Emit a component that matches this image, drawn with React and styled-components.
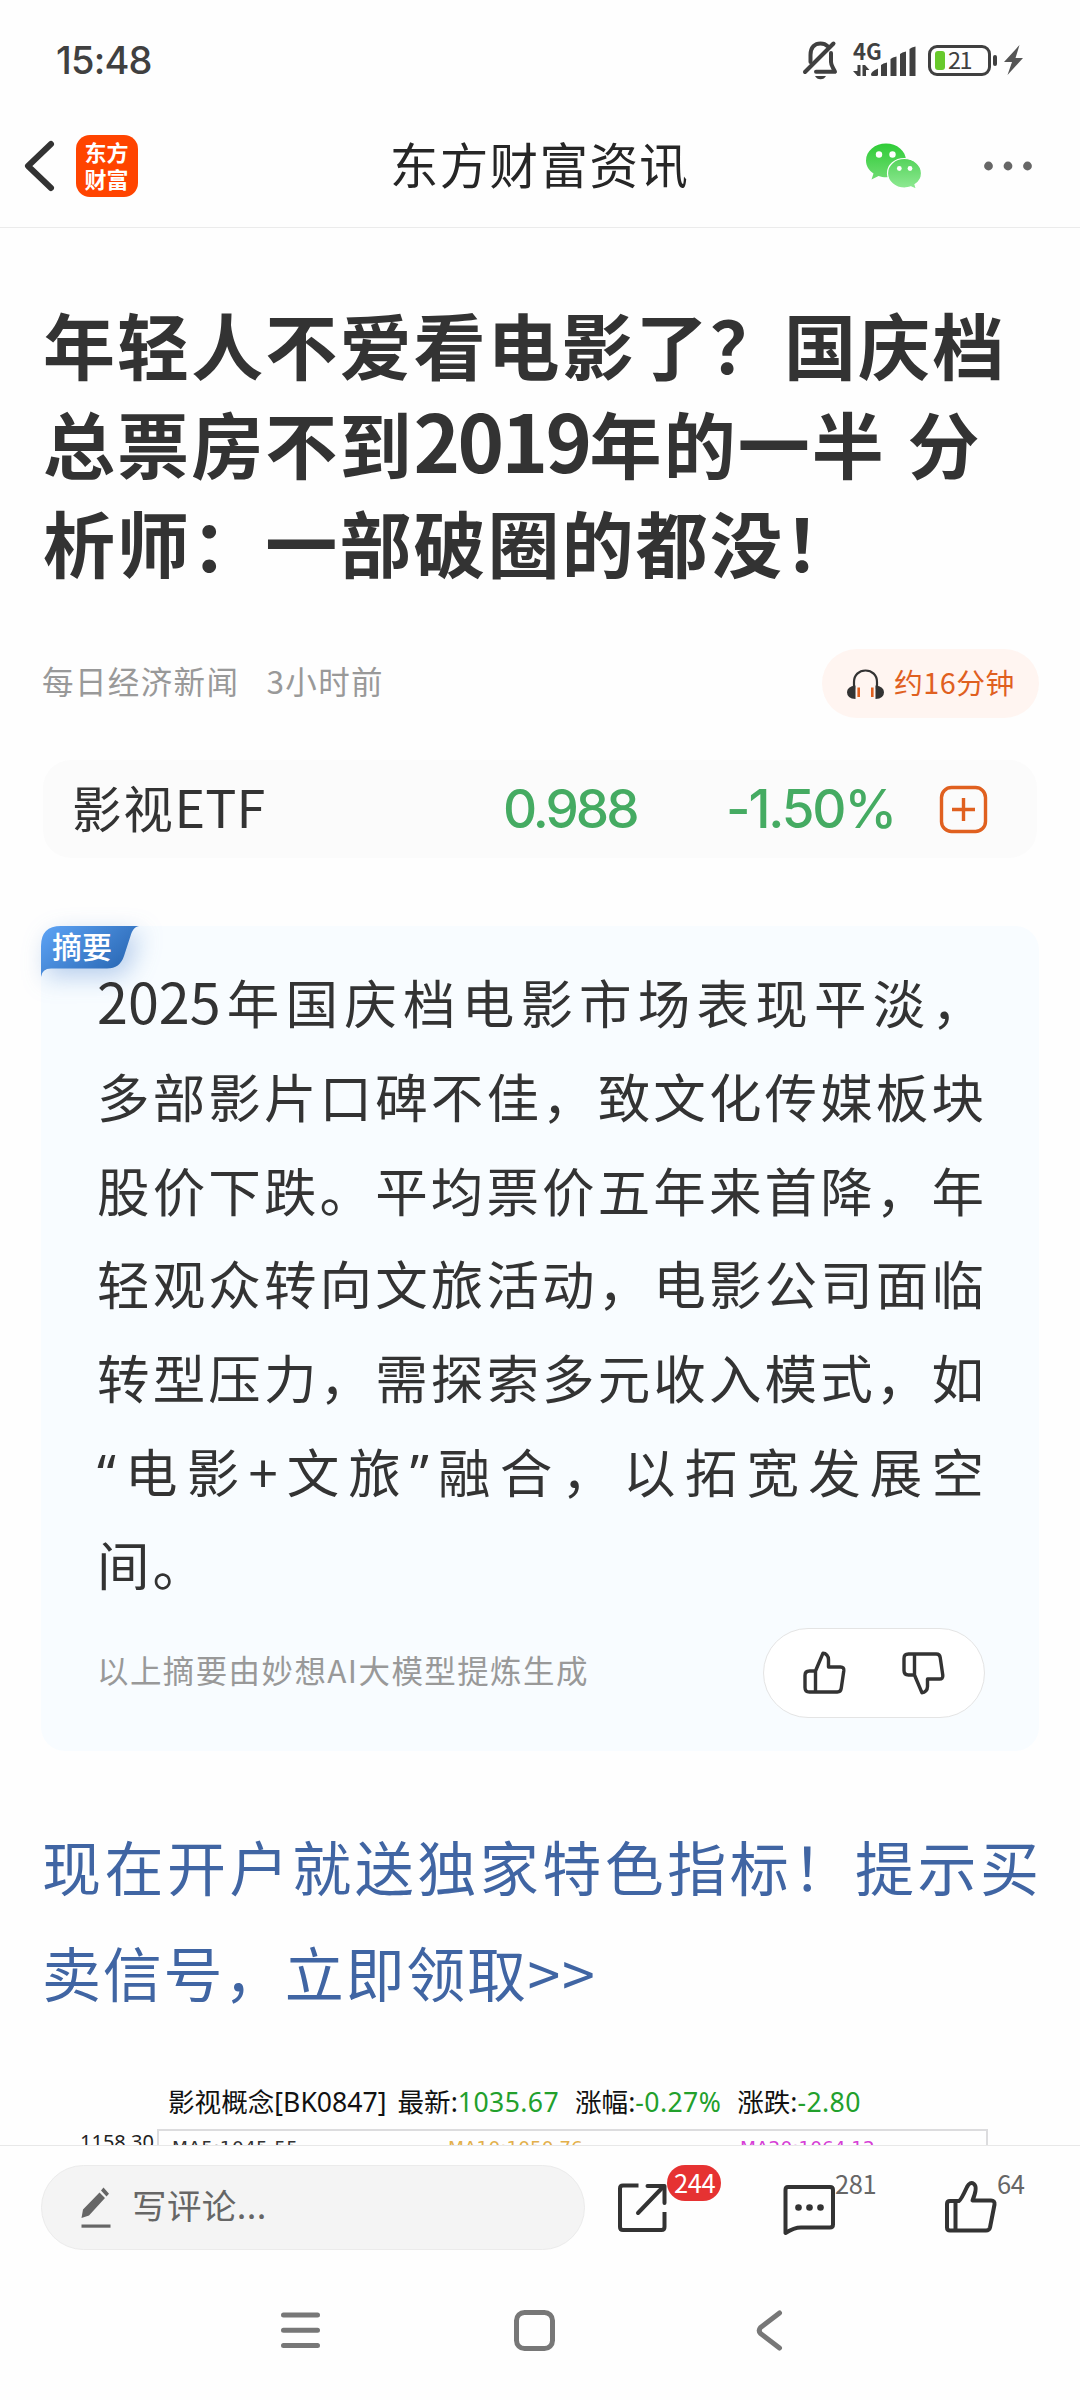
import React from "react";
import styled, { createGlobalStyle } from "styled-components";

const GlobalStyle = createGlobalStyle`
  * {
    box-sizing: border-box;
  }

  body {
    margin: 0;
    background: #fefefe;
    color: #333;
    font-family: "Noto Sans CJK SC", sans-serif;
  }

  svg {
    display: block;
    flex: none;
    overflow: visible;
  }
`;

const Page = styled.div`
  width: 1080px;
  height: 2400px;
  display: flex;
  flex-direction: column;
  overflow: hidden;
`;

/* digits and latin runs are a bit taller than the chinese glyphs */
const Num = styled.span`
  font-size: ${(props) => props.$size || "1.06em"};
  letter-spacing: ${(props) => props.$gap || "0"};
  line-height: 0;
`;

const Quote = styled.span`
  font-family: "Noto Sans", sans-serif;
  line-height: 0;
`;

const StatusBar = styled.div`
  flex: none;
  height: 104px;
  padding: 16px 57px 0 56px;
  display: flex;
  align-items: center;
  color: #404040;
`;

const Clock = styled.div`
  flex: 1;
  font-family: Inter, sans-serif;
  font-size: 38px;
  font-weight: 500;
  letter-spacing: -0.8px;
  line-height: 40px;
`;

const StatusIcons = styled.div`
  display: flex;
  align-items: center;
`;

const Signal = styled.div`
  display: flex;
  flex-direction: column;
  width: 62px;
  margin: 0 13px 0 15px;
  padding-bottom: 2px;

  span {
    height: 17px;
    font-family: "Noto Sans CJK SC", sans-serif;
    font-size: 22px;
    font-weight: 700;
    line-height: 17px;
  }

  svg {
    margin-top: -14px;
  }
`;

const Battery = styled.div`
  width: 63px;
  height: 31px;
  border: 3px solid #404040;
  border-radius: 9px;
  display: flex;
  align-items: center;
  padding-left: 4px;
  font-size: 23.5px;
  line-height: 23px;
  letter-spacing: -1.5px;

  span {
    padding-bottom: 2px;
  }
`;

const Charge = styled.i`
  width: 10px;
  height: 19px;
  margin-right: 3px;
  background: #68c92b;
  border-radius: 3px;
`;

const BatteryTip = styled.i`
  width: 4px;
  height: 11px;
  margin: 0 7px 0 2px;
  background: #404040;
  border-radius: 2px;
`;

const Header = styled.header`
  flex: none;
  height: 124px;
  display: grid;
  grid-template-columns: 1fr auto 1fr;
  align-items: center;
  border-bottom: 1px solid #ebebeb;
`;

const HeaderLeft = styled.div`
  display: flex;
  align-items: center;
  gap: 22px;
  padding-left: 24px;
`;

const Logo = styled.div`
  display: flex;
  flex-direction: column;
  gap: 3px;
  width: 62px;
  height: 62px;
  padding: 4px 0 0 8.5px;
  border-radius: 14px;
  background: #ff4400;
  color: #fff;
  font-size: 22px;
  font-weight: 700;
  line-height: 24px;
`;

const HeaderTitle = styled.h1`
  margin: 0;
  color: #262626;
  font-size: 48.5px;
  font-weight: 400;
  letter-spacing: 1.4px;
  line-height: 60px;
  padding: 0 1px 5px 0;
`;

const HeaderRight = styled.div`
  display: flex;
  align-items: center;
  justify-content: flex-end;
  gap: 62px;
  padding-right: 48px;
`;

const Article = styled.main`
  flex: none;
  height: 1917px;
  padding: 64.5px 41px 0;
  overflow: hidden;
`;

const Headline = styled.h2`
  margin: 0 0 59.5px 2px;
  font-size: 72px;
  font-weight: 700;
  letter-spacing: 2.1px;
  word-spacing: 3px;
  line-height: 99.1px;
  white-space: nowrap;
`;

const Meta = styled.div`
  display: flex;
  align-items: center;
  height: 69px;
  padding-left: 1px;
  color: #999;
  font-size: 31.5px;
  letter-spacing: 1.4px;

  > span {
    margin-right: 27px;
    padding-bottom: 7px;
  }
`;

const Listen = styled.div`
  display: flex;
  align-items: center;
  gap: 10px;
  width: 217px;
  height: 69px;
  margin-left: auto;
  padding-left: 25px;
  border-radius: 35px;
  background: #fff5f1;
  color: #e0601f;
  font-size: 28.8px;
  letter-spacing: 0.5px;

  span {
    padding-bottom: 5px;
  }
`;

const Stock = styled.div`
  display: flex;
  align-items: center;
  height: 98px;
  margin: 42px 2px 68px;
  padding-left: 29px;
  border-radius: 28px;
  background: #fbfbfb;
`;

const StockName = styled.div`
  width: 431px;
  padding-bottom: 6px;
  font-size: 49.5px;
  letter-spacing: 1.8px;
  white-space: nowrap;
`;

const Quotation = styled.div`
  width: ${(props) => props.$width};
  color: #45ab62;
  font-family: Inter, sans-serif;
  font-size: 53px;
  font-weight: 500;
  letter-spacing: ${(props) => props.$gap};
  white-space: nowrap;
`;

const Summary = styled.section`
  position: relative;
  height: 825px;
  padding: 29px 55px 0 56px;
  border-radius: 24px;
  background: #f8fcff;
`;

const SummaryTag = styled.div`
  position: absolute;
  left: 0;
  top: 0;

  svg {
    filter: drop-shadow(6px 8px 12px rgba(60, 120, 200, 0.35));
  }

  span {
    position: absolute;
    left: 11px;
    top: 0;
    color: #fff;
    font-size: 30px;
    font-weight: 500;
    line-height: 38px;
    white-space: nowrap;
  }
`;

const Line = styled.p`
  margin: 0;
  position: relative;
  font-size: 52.5px;
  line-height: 93.65px;
  white-space: nowrap;
  text-align: justify;
  text-align-last: ${(props) => (props.$last ? "left" : "justify")};
  letter-spacing: ${(props) => (props.$last ? "3px" : "0")};
`;

const SummaryFoot = styled.div`
  display: flex;
  align-items: center;
  justify-content: space-between;
  margin-top: 17px;
  color: #999;
  font-size: 31.5px;
  letter-spacing: 1.4px;

  > span {
    padding-bottom: 7px;
  }
`;

const Feedback = styled.div`
  display: flex;
  align-items: center;
  width: 222px;
  height: 90px;
  margin-right: -1px;
  padding: 0 39px;
  justify-content: space-between;
  border: 1px solid #e4e4e4;
  border-radius: 45px;
  background: #fff;
`;

const Promo = styled.div`
  margin: 62px 0 60px 1px;
  color: #4065a3;

  p {
    margin: 0;
    font-size: 59px;
    line-height: 105.5px;
    white-space: nowrap;
    letter-spacing: 1.7px;
  }

  p:first-child {
    width: 997px;
    letter-spacing: 0;
    text-align-last: justify;
  }
`;

const ChartTitle = styled.div`
  display: flex;
  height: 36px;
  margin-left: 127px;
  color: #111;
  font-family: "Noto Sans", "Noto Sans CJK SC", sans-serif;
  font-size: 26.6px;
  line-height: 36px;
  white-space: pre;

  b {
    color: #22a02c;
    font-weight: 400;
    letter-spacing: 0.4px;
  }
`;

const ChartLabel = styled.span`
  margin-right: ${(props) => props.$gap || "0"};
`;

const Chart = styled.div`
  display: flex;
  margin-top: 9px;
  margin-left: 39px;
`;

const Axis = styled.div`
  width: 77px;
  color: #222;
  font-family: "Noto Sans", sans-serif;
  font-size: 20px;
  line-height: 25px;
`;

const Plot = styled.div`
  display: flex;
  width: 831px;
  height: 60px;
  padding: 8px 0 0 13px;
  border: 2px solid #dcdcde;
`;

const Average = styled.span`
  width: ${(props) => props.$width};
  color: ${(props) => props.$color};
  font-family: "DejaVu Sans", sans-serif;
  font-size: 18.5px;
  line-height: 18px;
  letter-spacing: ${(props) => props.$gap || "0"};
`;

const BottomBar = styled.footer`
  flex: none;
  display: flex;
  height: 125px;
  padding: 19px 0 0 41px;
  border-top: 1px solid #e8e8e8;
`;

const CommentInput = styled.div`
  display: flex;
  align-items: center;
  gap: 21px;
  width: 544px;
  height: 85px;
  padding-left: 39px;
  border: 1px solid #ebebeb;
  border-radius: 43px;
  background: #f4f4f4;
  color: #666;
  font-size: 34.5px;
  letter-spacing: 0.4px;

  span {
    padding-bottom: 7px;
  }
`;

const Action = styled.div`
  position: relative;
  height: 70px;
  padding-top: 16px;
  margin-left: ${(props) => props.$left};
`;

const Count = styled.span`
  position: absolute;
  left: ${(props) => (props.$badge ? "49px" : "52px")};
  top: ${(props) => (props.$badge ? "0" : "1px")};
  height: 36px;
  padding: ${(props) => (props.$badge ? "0 6px 0 7px" : "0")};
  border-radius: 18px;
  background: ${(props) => (props.$badge ? "#e63232" : "none")};
  color: ${(props) => (props.$badge ? "#fff" : "#666")};
  font-size: 25.5px;
  letter-spacing: -0.4px;
  line-height: 34px;
`;

const NavBar = styled.nav`
  display: flex;
  align-items: center;
  height: 120px;
  padding-left: 281px;
`;

const NavItem = styled.div`
  width: ${(props) => props.$width};
`;

const thumbUp = "M12.5 20 20 2.2C23 2.2 25.5 5 25.5 8.5V16H37.5Q41.2 16 40.8 19.8L38.2 37.6Q37.7 41 34.3 41H6.5Q2 41 2 36.5V24.5Q2 20 6.5 20ZM12.5 20V41";

function Thumb({ down }) {
  return (
    <svg width="43" height="43" viewBox="0 0 43 43" fill="none" stroke="#333" strokeWidth="3.4" strokeLinejoin="round">
      <path d={thumbUp} transform={down ? "translate(0 44) scale(1 -1)" : undefined} />
    </svg>
  );
}

function StatusRow() {
  return (
    <StatusBar>
      <Clock>15:48</Clock>
      <StatusIcons>
        <svg width="35" height="38" viewBox="0 0 35 38" fill="none" stroke="#404040" strokeWidth="4" strokeLinecap="round">
          <path d="M7.5 21V14C7.5 6 12 2.4 17.5 2.4c3 0 5.4 1 7 2.8" />
          <path d="M28 12v9c0 4 2.500 6 4 9.800H13" strokeLinejoin="round" />
          <path d="M2 31 30.500 2.500" />
          <path d="M12 35h11c-1 2-3 3.300-5.500 3.300S13 37 12 35Z" fill="#404040" stroke="none" />
        </svg>
        <Signal>
          <span>4G</span>
          <svg width="62" height="31" viewBox="0 0 62 31" fill="#404040">
            <path d="M4.500 20h3v11h-3L0 26h4.500ZM9.500 31V20h2.500l4.500 5h-3.500v6Z" />
            <path d="M18 29.500q0-3 7-6V29.500q0 1.500-1.500 1.500h-4q-1.500 0-1.500-1.500Z" />
            <path d="M28 20q2-2 6-2.500v13.500h-6ZM37.500 14q2-2 6-2.500V31h-6ZM47 9q2-2 6-2.500V31h-6ZM56.500 4q2-2 6-2.500V31h-6Z" />
          </svg>
        </Signal>
        <Battery>
          <Charge />
          <span>21</span>
        </Battery>
        <BatteryTip />
        <svg width="19" height="30" viewBox="0 0 19 30" fill="#555">
          <path d="M15.500 0 0 17h8L3.500 30 19 13h-7.500Z" />
        </svg>
      </StatusIcons>
    </StatusBar>
  );
}

function TopBar() {
  return (
    <Header>
      <HeaderLeft>
        <svg width="30" height="50" viewBox="0 0 30 50" fill="none" stroke="#333" strokeWidth="6" strokeLinecap="round" strokeLinejoin="round">
          <path d="M27 3 4 25l23 22" />
        </svg>
        <Logo>
          <span>东方</span>
          <span>财富</span>
        </Logo>
      </HeaderLeft>
      <HeaderTitle>东方财富资讯</HeaderTitle>
      <HeaderRight>
        <svg width="56" height="46" viewBox="0 0 56 46">
          <defs>
            <linearGradient id="wechatBack" x1="0" y1="0" x2="0" y2="1">
              <stop offset="0" stopColor="#2fcc37" />
              <stop offset="1" stopColor="#6fdc72" />
            </linearGradient>
            <linearGradient id="wechatFront" x1="0" y1="0" x2="0" y2="1">
              <stop offset="0" stopColor="#55d35b" />
              <stop offset="1" stopColor="#90ea94" />
            </linearGradient>
          </defs>
          <path d="M20 0.500C9 0.500 0 8 0 17.500 0 23 3 27.500 7.500 30.500L5.500 36.500 12.500 33C15 34 17.500 34.300 20 34.300 31 34.300 40 27 40 17.500S31 0.500 20 0.500Z" fill="url(#wechatBack)" />
          <path d="M38.300 15.500C29 15.500 21.500 22 21.500 30.200S29 45 38.300 45c2.500 0 4.700-.4 6.700-1.200L50.500 46.200 49 41.500C53 39 55.500 35 55.500 30.200 55.500 22 47.600 15.500 38.300 15.500Z" fill="url(#wechatFront)" stroke="#fff" strokeWidth="1.200" />
          <g fill="#fff">
            <circle cx="13" cy="11.500" r="3.200" />
            <circle cx="26.500" cy="11.500" r="3.200" />
            <circle cx="33.300" cy="25.500" r="2.400" />
            <circle cx="44" cy="25.500" r="2.400" />
          </g>
        </svg>
        <svg width="48" height="10" viewBox="0 0 48 10" fill="#666">
          <circle cx="4.500" cy="5" r="4.400" />
          <circle cx="24" cy="5" r="4.400" />
          <circle cx="43.500" cy="5" r="4.400" />
        </svg>
      </HeaderRight>
    </Header>
  );
}

function SummaryCard() {
  return (
    <Summary>
      <SummaryTag>
        <svg width="98" height="51" viewBox="0 0 98 51">
          <defs>
            <linearGradient id="tag" x1="0" y1="0" x2="1" y2="0.600">
              <stop offset="0" stopColor="#5ea4f6" />
              <stop offset="1" stopColor="#2a68b4" />
            </linearGradient>
          </defs>
          <path d="M0 20Q0 0 20 0H98C93 1 91 5 89.500 10L83 30Q79 42.500 66 42.500H10Q1 42.500 0 51Z" fill="url(#tag)" />
        </svg>
        <span>摘要</span>
      </SummaryTag>
      <Line>
        <Num>2025</Num>年国庆档电影市场表现平淡，
      </Line>
      <Line>多部影片口碑不佳，致文化传媒板块</Line>
      <Line>股价下跌。平均票价五年来首降，年</Line>
      <Line>轻观众转向文旅活动，电影公司面临</Line>
      <Line>转型压力，需探索多元收入模式，如</Line>
      <Line>
        <Quote>“</Quote>电影+文旅<Quote>”</Quote>融合，以拓宽发展空
      </Line>
      <Line $last>间。</Line>
      <SummaryFoot>
        <span>以上摘要由妙想AI大模型提炼生成</span>
        <Feedback>
          <Thumb />
          <Thumb down />
        </Feedback>
      </SummaryFoot>
    </Summary>
  );
}

function CommentBar() {
  return (
    <BottomBar>
      <CommentInput>
        <svg width="30" height="41" viewBox="0 0 30 41" fill="#666">
          <path d="M18.500 5.500 24 11 8 28.500 0.500 31 2 22.500ZM22.500 0.500 28 6.800 25.500 9.600 20 3.500Z" />
          <path d="M0.500 37.500h29v3.200h-29Z" />
        </svg>
        <span>写评论...</span>
      </CommentInput>
      <Action $left="33px">
        <svg width="48" height="52" viewBox="0 0 48 52" fill="none" stroke="#333" strokeWidth="4">
          <path d="M20.500 4.500H5Q2 4.500 2 7.500V46Q2 49 5 49H43.500Q46.500 49 46.500 46V31" />
          <path d="M29.500 5H46.500V22" strokeLinejoin="round" strokeLinecap="round" />
          <path d="M44.500 6.500 20 32" strokeLinecap="round" />
        </svg>
        <Count $badge>244</Count>
      </Action>
      <Action $left="117px">
        <svg width="52" height="52" viewBox="0 0 52 52" fill="none" stroke="#333" strokeWidth="4" strokeLinejoin="round">
          <path d="M5 6H47Q50 6 50 9V43.500Q50 46.500 47 46.500H18Q11 46.500 2.500 52V9Q2.500 6 5 6Z" />
          <g fill="#333" stroke="none">
            <circle cx="15.500" cy="26.500" r="3.300" />
            <circle cx="26.500" cy="26.500" r="3.300" />
            <circle cx="37.500" cy="26.500" r="3.300" />
          </g>
        </svg>
        <Count>281</Count>
      </Action>
      <Action $left="110px">
        <svg width="52" height="52" viewBox="0 0 52 52" fill="none" stroke="#333" strokeWidth="4" strokeLinejoin="round">
          <path d="M5 20H14Q16 19 22 6Q25 0 29 3Q33 6 27.500 19.500H46Q50 19.500 49.500 23.500L45 46.500Q44.200 49.500 41 49.500H5Q2 49.500 2 46.500V23Q2 20 5 20ZM10.500 20V49" />
        </svg>
        <Count>64</Count>
      </Action>
    </BottomBar>
  );
}

function SystemNav() {
  return (
    <NavBar>
      <NavItem $width="233px">
        <svg width="39" height="40" viewBox="0 0 39 40" stroke="#777" strokeWidth="5" strokeLinecap="round">
          <path d="M2.500 5h34M2.500 20.300h34M2.500 35.500h34" />
        </svg>
      </NavItem>
      <NavItem $width="243px">
        <svg width="41" height="41" viewBox="0 0 41 41" fill="none" stroke="#777" strokeWidth="5">
          <rect x="2.500" y="2.500" width="36" height="36" rx="8" />
        </svg>
      </NavItem>
      <NavItem $width="26px">
        <svg width="26" height="41" viewBox="0 0 26 41" fill="none" stroke="#777" strokeWidth="5" strokeLinecap="round">
          <path d="M22.500 3 3.500 17.500Q1 20.500 3.500 23.500L22.500 38" />
        </svg>
      </NavItem>
    </NavBar>
  );
}

const App = () => {
  return (
    <>
      <GlobalStyle />
      <Page lang="zh-CN">
        <StatusRow />
        <TopBar />
        <Article>
          <Headline>
            年轻人不爱看电影了？国庆档
            <br />
            总票房不到
            <Num $size="79px" $gap="-2.6px">2019</Num>
            年的一半 分
            <br />
            析师：一部破圈的都没！
          </Headline>
          <Meta>
            <span>每日经济新闻</span>
            <span>3小时前</span>
            <Listen>
              <svg width="37" height="30" viewBox="0 0 37 30" fill="none">
                <path d="M7 20V13C7 6 12 1.500 18.500 1.500S30 6 30 13V20" stroke="#333" strokeWidth="2.200" />
                <path d="M8.500 16.500V30Q0 29.500 0 23.200 0 17.500 8.500 16.500ZM28.500 16.500V30Q37 29.500 37 23.200 37 17.500 28.500 16.500Z" fill="#333" />
                <path d="M11.700 18.500V28M25.300 18.500V28" stroke="#e0601f" strokeWidth="2.600" />
              </svg>
              <span>约16分钟</span>
            </Listen>
          </Meta>
          <Stock>
            <StockName>
              影视<Num $size="52px" $gap="0">ETF</Num>
            </StockName>
            <Quotation $width="223px" $gap="-3px">0.988</Quotation>
            <Quotation $width="214px" $gap="-2.1px">-1.50%</Quotation>
            <svg width="47" height="47" viewBox="0 0 47 47" fill="none" stroke="#e0601f" strokeWidth="3.4">
              <rect x="1.500" y="1.500" width="44" height="44" rx="10" />
              <path d="M12 23.500h23M23.500 12v23" />
            </svg>
          </Stock>
          <SummaryCard />
          <Promo>
            <p>现在开户就送独家特色指标！提示买</p>
            <p>卖信号，立即领取&gt;&gt;</p>
          </Promo>
          <ChartTitle>
            <ChartLabel $gap="11px">影视概念[BK0847]</ChartLabel>
            <ChartLabel $gap="16px">最新:<b>1035.67</b></ChartLabel>
            <ChartLabel $gap="16px">涨幅:<b>-0.27%</b></ChartLabel>
            <ChartLabel>涨跌:<b>-2.80</b></ChartLabel>
          </ChartTitle>
          <Chart>
            <Axis>1158.30</Axis>
            <Plot>
              <Average $width="276px" $color="#333" $gap="0.300px">MA5:1045.55</Average>
              <Average $width="292px" $color="#e3b04b">MA10:1050.76</Average>
              <Average $width="200px" $color="#d63fd6">MA20:1064.12</Average>
            </Plot>
          </Chart>
        </Article>
        <CommentBar />
        <SystemNav />
      </Page>
    </>
  );
};

export default App;
